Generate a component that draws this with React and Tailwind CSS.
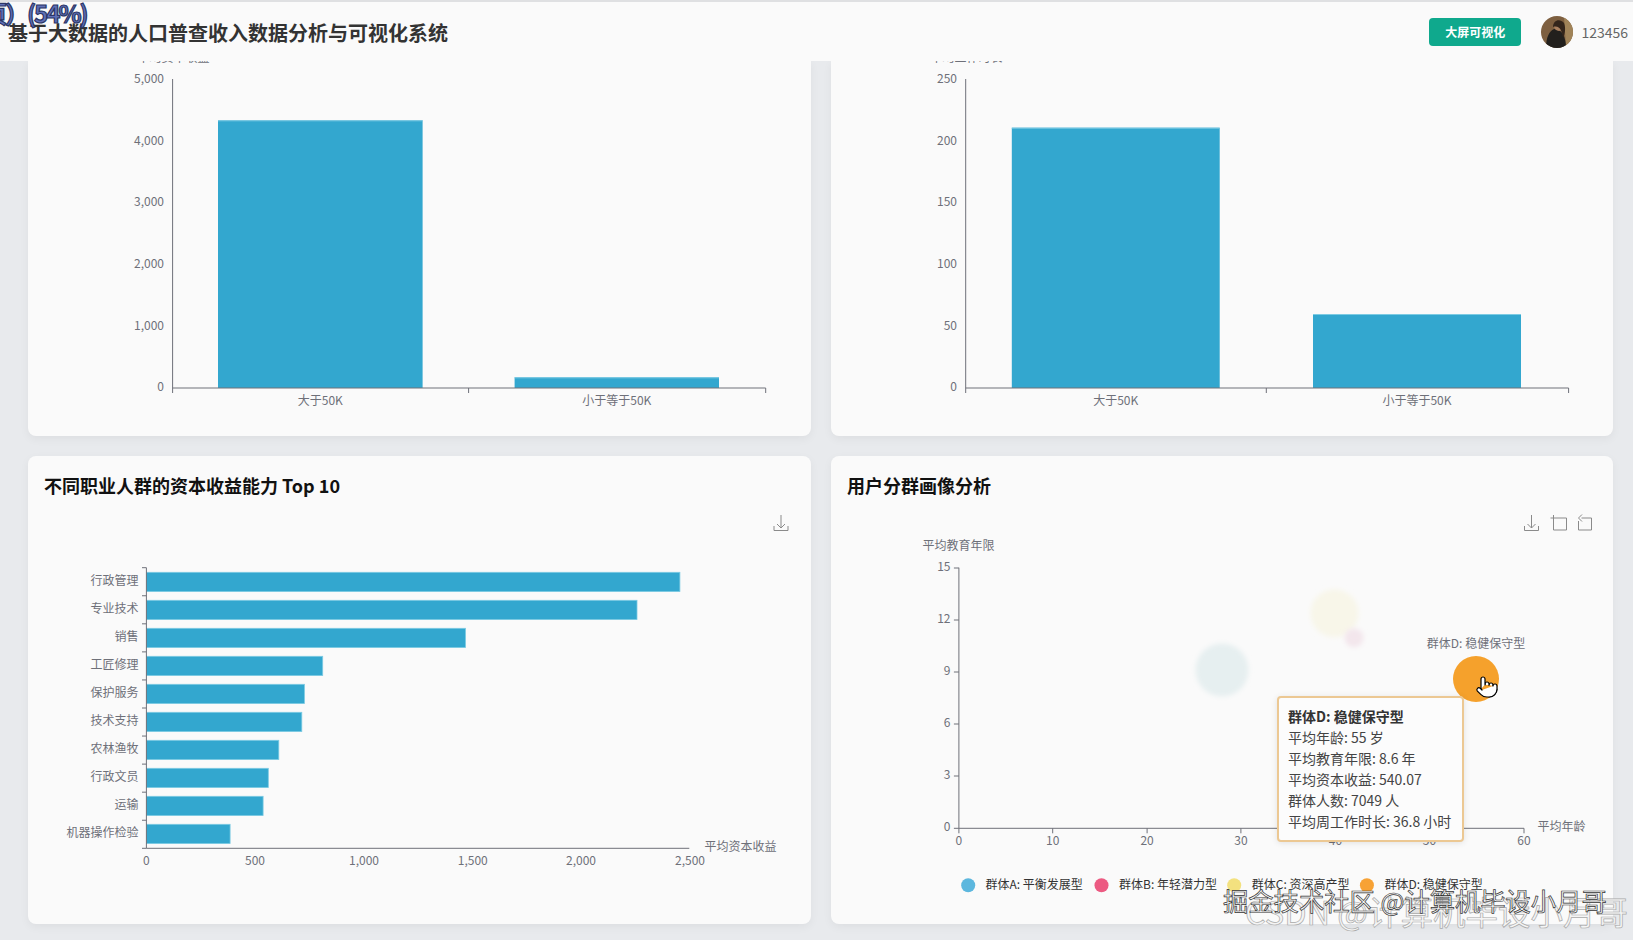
import React from 'react';
import { Pointer } from 'lucide-react';

const BAR = '#33a7cf';
const EDGE = '#7ccbe3';
const AXIS = '#6e7079';
const LABEL = '#6e7079';

const occupations = [
    ['行政管理', 679.9],
    ['专业技术', 637],
    ['销售', 465.5],
    ['工匠修理', 322.7],
    ['保护服务', 304.4],
    ['技术支持', 301.8],
    ['农林渔牧', 278.8],
    ['行政文员', 268.3],
    ['运输', 263.1],
    ['机器操作检验', 230.1],
];

const legend = [
    ['群体A: 平衡发展型', '#5cb7de', 967.7, 985],
    ['群体B: 年轻潜力型', '#ec5a82', 1101, 1118.6],
    ['群体C: 资深高产型', '#f3e17f', 1233.7, 1251.3],
    ['群体D: 稳健保守型', '#f7a235', 1366.4, 1384],
];

const tooltipLines = ['平均年龄: 55 岁', '平均教育年限: 8.6 年', '平均资本收益: 540.07', '群体人数: 7049 人', '平均周工作时长: 36.8 小时'];

// 柱状图，坐标直接用页面上的像素
const IncomeChart = ({ viewBox, yName, nameX, axisX, axisEnd, midX, labelX, ticks, bars }) => (
    <svg viewBox={viewBox} className="block w-full h-full">
        <text x={nameX} y={62} fontSize="12" fill={LABEL} textAnchor="middle">{yName}</text>
        {ticks.map(([t, y]) => (
            <text key={t} x={labelX} y={y + 4} fontSize="12" fill={LABEL} textAnchor="end">{t}</text>
        ))}
        {bars.map((b) => (
            <g key={b.name}>
                <rect x={b.x} y={b.top} width={b.w} height={388 - b.top} fill={BAR} />
                <rect x={b.x} y={b.top} width={b.w} height={1} fill={EDGE} />
                <text x={b.x + b.w / 2} y={405} fontSize="12" fill={LABEL} textAnchor="middle">{b.name}</text>
            </g>
        ))}
        <path d={`M${axisX} 79V393M${axisX} 388H${axisEnd}V393M${midX} 388V393`} stroke={AXIS} fill="none" />
    </svg>
);

const DownloadIcon = ({ x }) => (
    <path d={`M${x} 515V528M${x - 4} 524L${x} 528L${x + 4} 524M${x - 7} 526V530.5H${x + 7}V526`} stroke="#8a8a8a" fill="none" />
);

const OccupationChart = () => (
    <svg viewBox="28 501 783 423" className="block w-full h-full">
        <DownloadIcon x={781} />
        {occupations.map(([name, end], i) => (
            <g key={name}>
                <rect x={146.4} y={572.3 + i * 28} width={end - 146.4} height={19.3} fill={BAR} stroke={EDGE} strokeWidth="0.8" />
                <text x={138.6} y={585 + i * 28} fontSize="12" fill={LABEL} textAnchor="end">{name}</text>
            </g>
        ))}
        {occupations.concat([['end', 0]]).map(([name], i) => (
            <path key={name} d={`M142 ${567.7 + i * 28.06}H146.4`} stroke={AXIS} />
        ))}
        <path d="M146.4 567.7V848.3H689.3" stroke={AXIS} fill="none" />
        {[['0', 146.4], ['500', 255], ['1,000', 364], ['1,500', 472.8], ['2,000', 581], ['2,500', 690]].map(([t, x]) => (
            <text key={t} x={x} y={865} fontSize="12" fill={LABEL} textAnchor="middle">{t}</text>
        ))}
        <text x={704.5} y={851} fontSize="12" fill={LABEL}>平均资本收益</text>
    </svg>
);

const SegmentChart = () => (
    <svg viewBox="831 501 781 423" className="block w-full h-full">
        <defs>
            <filter id="soft" x="-30%" y="-30%" width="160%" height="160%">
                <feGaussianBlur stdDeviation="2.5" />
            </filter>
        </defs>
        <DownloadIcon x={1531} />
        <path d="M1550 518H1566V530H1553V515" stroke="#8a8a8a" fill="none" />
        <path d="M1581 518H1591V530H1578V521M1581.5 514.5L1578 518L1581.5 521.5" stroke="#8a8a8a" fill="none" />

        <text x={958} y={550} fontSize="12" fill={LABEL} textAnchor="middle">平均教育年限</text>
        {[['15', 568], ['12', 620], ['9', 672], ['6', 724], ['3', 776], ['0', 828.3]].map(([t, y]) => (
            <g key={t}>
                <text x={950} y={y + 3} fontSize="12" fill={LABEL} textAnchor="end">{t}</text>
                <path d={`M953.4 ${y}H958.4`} stroke={AXIS} />
            </g>
        ))}
        {[['0', 958.4], ['10', 1052.2], ['20', 1146.6], ['30', 1240.4], ['40', 1335], ['50', 1429], ['60', 1523.5]].map(([t, x]) => (
            <g key={t}>
                <text x={x} y={845} fontSize="12" fill={LABEL} textAnchor="middle">{t}</text>
                <path d={`M${x} 828.3V833.3`} stroke={AXIS} />
            </g>
        ))}
        <path d="M958.4 567.7V828.3H1523.5" stroke={AXIS} fill="none" />
        <text x={1537} y={831} fontSize="12" fill={LABEL}>平均年龄</text>

        <circle cx={1221.5} cy={670} r={26.5} fill="#e6eff0" filter="url(#soft)" />
        <circle cx={1334} cy={613.3} r={24} fill="#f8f6e9" filter="url(#soft)" />
        <circle cx={1353.5} cy={637.7} r={9.5} fill="#f3e6ec" filter="url(#soft)" />
        <circle cx={1475.5} cy={679} r={23} fill="#f5a12c" />
        <text x={1475.5} y={648} fontSize="12" fill={LABEL} textAnchor="middle">群体D: 稳健保守型</text>

        {legend.map(([name, color, cx, tx]) => (
            <g key={name}>
                <circle cx={cx} cy={885.3} r={7} fill={color} />
                <text x={tx} y={889} fontSize="12" fill="#333">{name}</text>
            </g>
        ))}
    </svg>
);

const Avatar = () => (
    <svg viewBox="0 0 32 32" className="w-8 h-8 rounded-full shrink-0">
        <rect width="32" height="32" fill="#7d5f40" />
        <path d="M23 0H32V32H25Z" fill="#a08358" />
        <path d="M5 32C5 22 8 15 13 13C20 12 25 20 25 32Z" fill="#22201d" />
        <circle cx="18" cy="10" r="5" fill="#a87f5f" />
        <path d="M12 11C12 4 19 2 23 7C25 12 24 18 22 22C21 15 19 9 12 11Z" fill="#33251b" />
    </svg>
);

const App = () => {
    return (
        <div className="relative h-[940px] overflow-hidden bg-[#e8eaed] font-['Noto_Sans_CJK_SC','Noto_Sans',sans-serif]">
            <header className="relative z-10 h-[61px] flex items-center justify-between bg-[#fafafa] border-t-2 border-[#dfe0e2] pl-2 pr-[5px]">
                <h1 className="text-xl font-bold text-[#333] leading-7 mt-0.5">基于大数据的人口普查收入数据分析与可视化系统</h1>
                <div className="flex items-center">
                    <button className="w-[92px] h-[28px] rounded bg-[#0fa98d] text-white text-xs font-bold">大屏可视化</button>
                    <div className="ml-[20px]"><Avatar /></div>
                    <span className="ml-2 text-sm text-[#666]">123456</span>
                </div>
            </header>

            <main className="grid grid-cols-[783px_782px] grid-rows-[375px_468px] gap-x-5 gap-y-5 pl-7">
                <section className="rounded-b-lg bg-[#fafafa] shadow-[0_3px_10px_rgba(0,0,0,0.05)] overflow-hidden">
                    <IncomeChart
                        viewBox="28 61 783 375"
                        yName="平均资本收益"
                        nameX={173.5}
                        axisX={172.6}
                        axisEnd={765.7}
                        midX={468.6}
                        labelX={164}
                        ticks={[['5,000', 78.7], ['4,000', 140.5], ['3,000', 202], ['2,000', 264], ['1,000', 326], ['0', 387]]}
                        bars={[
                            { name: '大于50K', x: 218, w: 204.6, top: 120.3 },
                            { name: '小于等于50K', x: 514.6, w: 204.4, top: 377.3 },
                        ]}
                    />
                </section>
                <section className="rounded-b-lg bg-[#fafafa] shadow-[0_3px_10px_rgba(0,0,0,0.05)] overflow-hidden">
                    <IncomeChart
                        viewBox="831 61 782 375"
                        yName="平均工作时长"
                        nameX={966.5}
                        axisX={965.7}
                        axisEnd={1568.6}
                        midX={1266.3}
                        labelX={957}
                        ticks={[['250', 78.7], ['200', 140.5], ['150', 202], ['100', 264], ['50', 326], ['0', 387]]}
                        bars={[
                            { name: '大于50K', x: 1011.8, w: 207.9, top: 127.7 },
                            { name: '小于等于50K', x: 1313, w: 208, top: 314 },
                        ]}
                    />
                </section>
                <section className="flex flex-col rounded-lg bg-[#fafafa] shadow-[0_3px_10px_rgba(0,0,0,0.05)]">
                    <h3 className="pt-[15px] pl-4 h-[45px] text-lg leading-7 font-bold text-[#111]">不同职业人群的资本收益能力 Top 10</h3>
                    <div className="flex-1 min-h-0"><OccupationChart /></div>
                </section>
                <section className="flex flex-col rounded-lg bg-[#fafafa] shadow-[0_3px_10px_rgba(0,0,0,0.05)]">
                    <h3 className="pt-[15px] pl-4 h-[45px] text-lg leading-7 font-bold text-[#111]">用户分群画像分析</h3>
                    <div className="flex-1 min-h-0"><SegmentChart /></div>
                </section>
            </main>

            {/* 悬浮提示 */}
            <div className="absolute left-[1277px] top-[696px] w-[187px] h-[146px] rounded border-2 border-[#ecc893] bg-[#fcfcfc] px-[9px] py-2 text-sm leading-[21px] text-[#444] shadow-[0_1px_6px_rgba(0,0,0,0.1)] whitespace-nowrap">
                <div className="font-bold text-[#333]">群体D: 稳健保守型</div>
                {tooltipLines.map((line) => (
                    <div key={line}>{line}</div>
                ))}
            </div>
            <Pointer className="absolute left-[1475px] top-[675px] w-6 h-6 text-black fill-white" strokeWidth={1.2} />

            {/* 视频水印 */}
            <div className="absolute z-20 -left-[17px] top-0 text-[24px] leading-[26px] font-bold text-[#5f70b8] [-webkit-text-stroke:1.2px_#2b3566] tracking-[-2px] whitespace-nowrap">页）(54%)</div>
            <div className="absolute left-[1245px] top-[889px] text-[32.5px] leading-[44px] text-[#f4f4f4] [-webkit-text-stroke:0.7px_#aaaaaa] whitespace-nowrap">CSDN @计算机毕设小月哥</div>
            <div className="absolute left-[1223px] top-[882px] text-[25.3px] leading-9 text-[#f8f8f8] [-webkit-text-stroke:0.7px_#333] whitespace-nowrap">掘金技术社区 @计算机毕设小月哥</div>
        </div>
    );
};

export default App;
